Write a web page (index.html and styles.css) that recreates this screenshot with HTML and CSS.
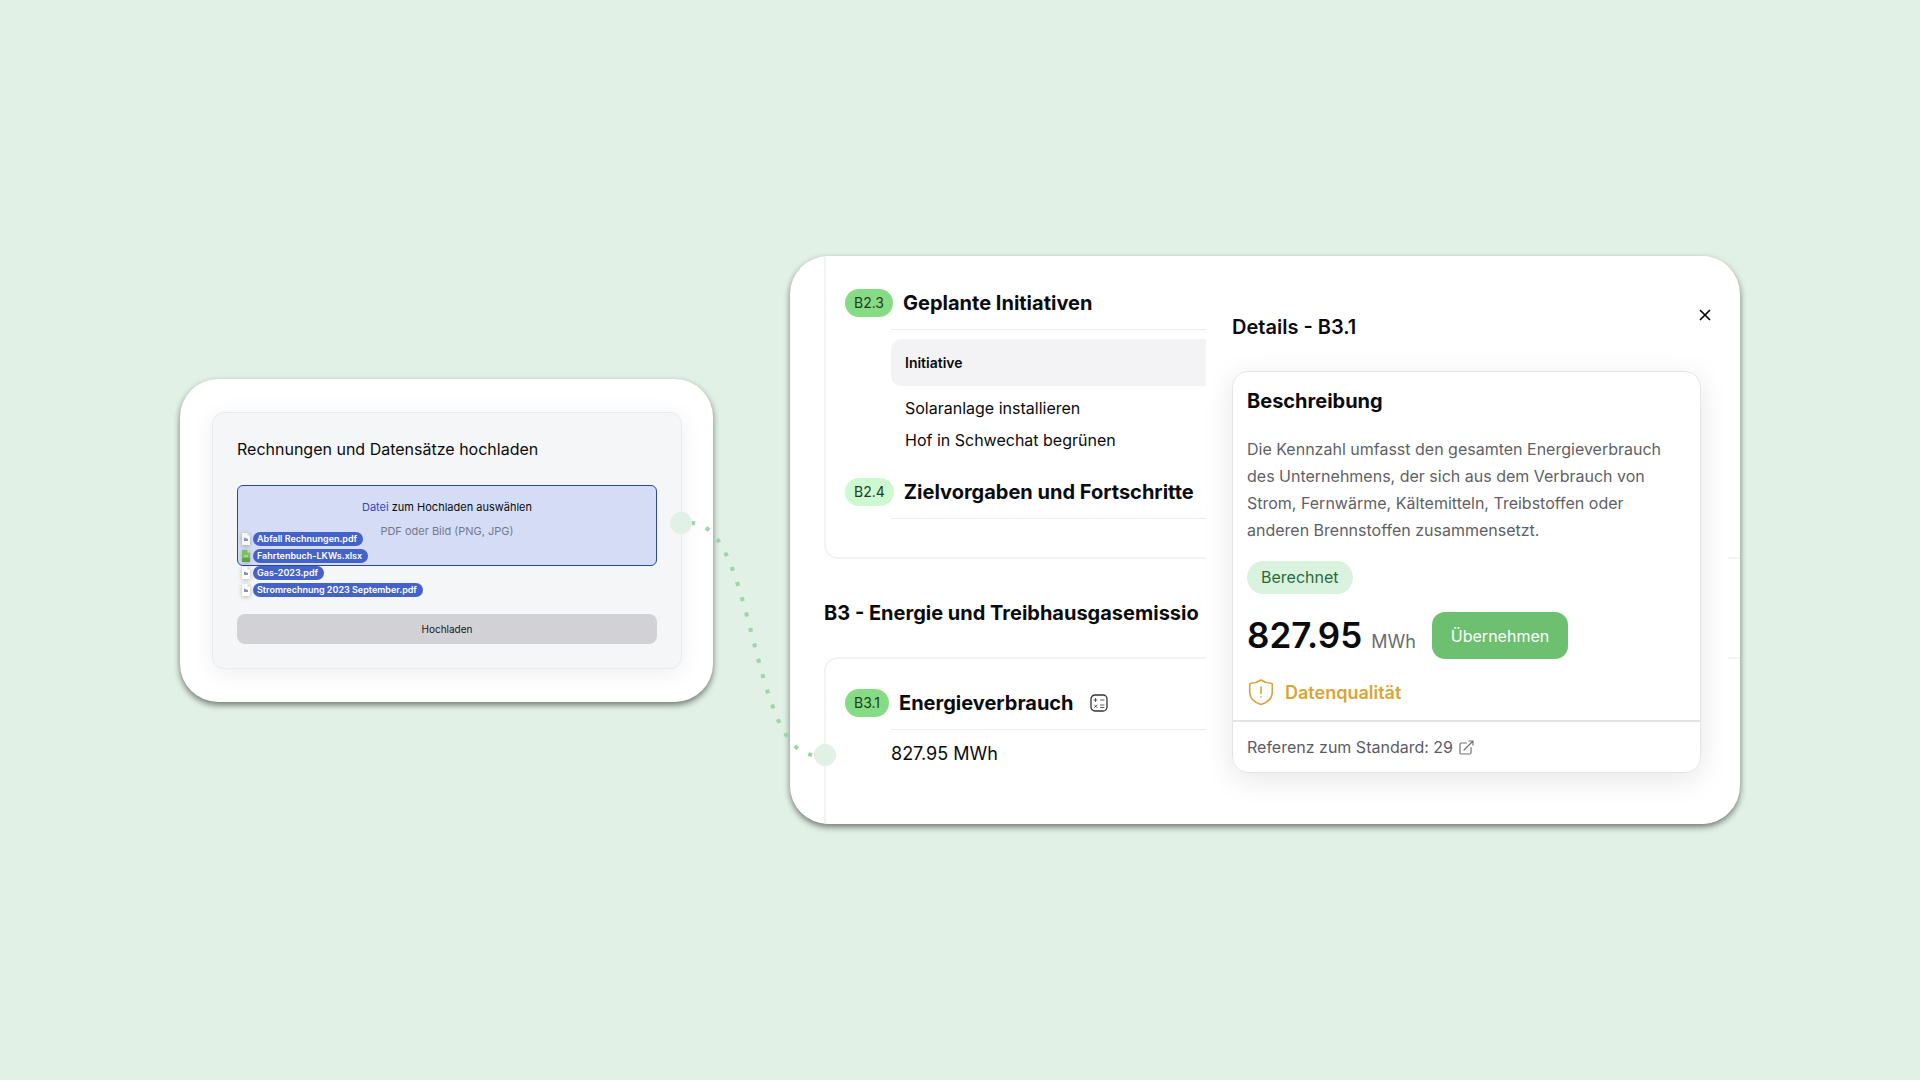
FILE: index.html
```html
<!DOCTYPE html>
<html lang="de">
<head>
    <meta charset="utf-8">
    <title>Energieverbrauch</title>
    <link rel="stylesheet" href="styles.css">
</head>
<body>
<main class="stage">

    <section class="card upload-card">
        <form class="upload">
            <h2 class="upload-title">Rechnungen und Datensätze hochladen</h2>
            <div class="dropzone">
                <p class="dropzone-text"><a href="#">Datei</a> zum Hochladen auswählen</p>
                <p class="dropzone-hint">PDF oder Bild (PNG, JPG)</p>
                <!-- files being dragged in, they hang over the edge of the dropzone -->
                <ul class="files">
                    <li><svg class="file-icon" viewBox="0 0 10 12"><path d="M1 0h5.500l2.500 2.500V12H1z" fill="#f7f7f8"/><path d="M6.500 0v2.500H9z" fill="#d5d7de"/><path d="M3 4.500l4 1.500v2H3z" fill="#8d95ad"/></svg><span>Abfall Rechnungen.pdf</span></li>
                    <li><svg class="file-icon" viewBox="0 0 10 12"><path d="M1 0h5.500l2.500 2.500V12H1z" fill="#7cc05c"/><path d="M6.500 0v2.500H9z" fill="#c9e8b4"/><path d="M1 8h8v4H1z" fill="#5aa544"/><path d="M3 5h4v2H3z" fill="#a5d68c"/></svg><span>Fahrtenbuch-LKWs.xlsx</span></li>
                    <li><svg class="file-icon" viewBox="0 0 10 12"><path d="M1 0h5.500l2.500 2.500V12H1z" fill="#fff"/><path d="M6.500 0v2.500H9z" fill="#d5d7de"/><path d="M3 4.500l4 1.500v2H3z" fill="#8d95ad"/></svg><span>Gas-2023.pdf</span></li>
                    <li><svg class="file-icon" viewBox="0 0 10 12"><path d="M1 0h5.500l2.500 2.500V12H1z" fill="#fff"/><path d="M6.500 0v2.500H9z" fill="#d5d7de"/><path d="M3 4.500l4 1.500v2H3z" fill="#8d95ad"/></svg><span>Stromrechnung 2023 September.pdf</span></li>
                </ul>
            </div>
            <button type="button" class="upload-button">Hochladen</button>
        </form>

        <!-- dotted line from the upload to the value -->
        <svg class="connector" width="166" height="254" viewBox="0 0 166 254">
            <path d="M21 11C85 11 81 243 145 243" fill="none" stroke="#9bd6a5" stroke-width="4" stroke-dasharray="4 11.900"/>
            <circle cx="11" cy="11" r="11" fill="#e0f1e5"/>
            <circle cx="155" cy="243" r="11" fill="#e0f1e5"/>
        </svg>
    </section>

    <section class="card report-card">
        <div class="report">
            <div class="box box-first">
                <div class="metric-head">
                    <span class="badge">B2.3</span>
                    <h3>Geplante Initiativen</h3>
                </div>
                <div class="metric-body">
                    <table class="initiatives">
                        <thead><tr><th>Initiative</th></tr></thead>
                        <tbody>
                            <tr><td>Solaranlage installieren</td></tr>
                            <tr><td>Hof in Schwechat begrünen</td></tr>
                        </tbody>
                    </table>
                </div>
                <div class="metric-head">
                    <span class="badge badge-light">B2.4</span>
                    <h3>Zielvorgaben und Fortschritte</h3>
                </div>
                <div class="metric-body"></div>
            </div>

            <h2 class="chapter">B3 - Energie und Treibhausgasemissio</h2>

            <div class="box box-last">
                <div class="metric-head">
                    <span class="badge">B3.1</span>
                    <h3>Energieverbrauch</h3>
                    <svg class="calc" width="18" height="18" viewBox="0 0 18 18" fill="none" stroke="#333" stroke-linecap="round">
                        <rect x="1" y="1" width="16" height="16" rx="4" stroke-width="1.300"/>
                        <path d="M4 6h3M5.500 4.500v3M10.500 6H14M4.500 11l2.500 2.500M7 11l-2.500 2.500M10.500 11H14M10.500 13.500H14" stroke-width=".8"/>
                    </svg>
                </div>
                <div class="metric-body">
                    <p class="value">827.95 MWh</p>
                </div>
            </div>
        </div>

        <aside class="drawer">
            <header class="drawer-head">
                <h2>Details - B3.1</h2>
                <button type="button" class="close" aria-label="Schließen">
                    <svg width="12" height="12" viewBox="0 0 12 12" stroke="#000" stroke-width="1.600"><path d="M1 1l10 10M11 1L1 11"/></svg>
                </button>
            </header>
            <article class="details">
                <div class="details-body">
                    <h3>Beschreibung</h3>
                    <p class="description">Die Kennzahl umfasst den gesamten Energieverbrauch<br>des Unternehmens, der sich aus dem Verbrauch von<br>Strom, Fernwärme, Kältemitteln, Treibstoffen oder<br>anderen Brennstoffen zusammensetzt.</p>
                    <span class="status">Berechnet</span>
                    <div class="result">
                        <strong>827.95</strong>
                        <span class="unit">MWh</span>
                        <button type="button" class="apply">Übernehmen</button>
                    </div>
                    <div class="quality">
                        <svg width="28" height="28" viewBox="0 0 28 28" fill="none" stroke="#d9a536" stroke-width="1.600" stroke-linecap="round" stroke-linejoin="round">
                            <path d="M14 2C11 4 7 5.200 3.800 5.300c-.7 0-1.100.4-1.100 1V14c0 6.500 5 10.500 11.300 12.500C20.300 24.500 25.300 20.500 25.300 14V6.300c0-.6-.4-1-1.100-1C21 5.200 17 4 14 2z"/>
                            <path d="M14 9v6.500M14 18.800v.2"/>
                        </svg>
                        <span>Datenqualität</span>
                    </div>
                </div>
                <footer class="reference">
                    <a href="#">Referenz zum Standard: 29
                        <svg width="15" height="15" viewBox="0 0 15 15" fill="none" stroke="#70707a" stroke-width="1.200" stroke-linecap="round" stroke-linejoin="round">
                            <path d="M7.500 3H2.200C1.500 3 1 3.500 1 4.200v8.600c0 .7.5 1.200 1.200 1.200h8.600c.7 0 1.200-.5 1.200-1.200V7.500M5 10L14 1M10 1h4v4"/>
                        </svg>
                    </a>
                </footer>
            </article>
        </aside>
    </section>

</main>
</body>
</html>
```

FILE: styles.css
```css
* {
    box-sizing: border-box;
}
body {
    margin: 0;
    background: #e1f1e5;
    font-family: Inter, "Liberation Sans", sans-serif;
    color: #0b0b0d;
}
h2, h3, p, ul {
    margin: 0;
    padding: 0;
}
button {
    border: 0;
    padding: 0;
    font-family: inherit;
    cursor: pointer;
}
a {
    text-decoration: none;
    color: inherit;
}
.stage {
    min-height: 100vh;
    padding: 0 180px;
    display: grid;
    grid-template-columns: 533fr 950fr;
    align-items: center;
    gap: 77px;
}
.card {
    position: relative;
    min-width: 0;
    background: #fff;
    border-radius: 38px;
    box-shadow: 0 3px 6px rgba(0, 0, 0, 0.5);
}

/* upload */
.upload-card {
    z-index: 1;
    padding: 33px 31px 33px 32px;
}
.upload {
    padding: 24px;
    background: #f4f6f8;
    border: 1px solid #e9eaed;
    border-radius: 12px;
    box-shadow: 0 4px 24px rgba(0, 0, 0, 0.07);
}
.upload-title {
    font-size: 16px;
    line-height: 24px;
    font-weight: 400;
}
.dropzone {
    position: relative;
    height: 81px;
    margin: 24px 0 48px;
    padding-top: 13px;
    text-align: center;
    background: #d5dcf6;
    border: 1px solid #2c479f;
    border-radius: 6px;
}
.dropzone-text {
    font-size: 11px;
    line-height: 16px;
}
.dropzone-text a {
    color: #3446c0;
}
.dropzone-hint {
    margin-top: 8px;
    font-size: 11px;
    line-height: 16px;
    color: #74788a;
}
.files {
    position: absolute;
    left: 3px;
    top: 46px;
    display: grid;
    gap: 3px;
    list-style: none;
    font-size: 9px;
    line-height: 14px;
    font-weight: 600;
    color: #fff;
}
.files li {
    display: flex;
    align-items: center;
    gap: 2px;
}
.files span {
    padding: 0 6px 0 4px;
    border-radius: 7px;
    background: #4562cb;
}
.file-icon {
    width: 10px;
    height: 12px;
    filter: drop-shadow(0 1px 2px rgba(0, 0, 0, 0.25));
}
.upload-button {
    display: block;
    width: 100%;
    height: 30px;
    border-radius: 8px;
    background: #d2d1d6;
    font-size: 10px;
    color: #18181b;
}
.connector {
    position: absolute;
    top: 133px;
    right: -123px;
}

/* report */
.report-card {
    overflow: hidden;
}
.box {
    margin: 0 -20px 0 34px;
    padding: 0 60px 0 19px;
    border: 2px solid #f3f3f4;
    border-radius: 14px;
}
.box-first {
    padding-top: 33px;
    padding-bottom: 38px;
    border-top: 0;
    border-top-left-radius: 0;
}
.box-last {
    padding-top: 30px;
    padding-bottom: 56px;
    border-bottom: 0;
    border-bottom-left-radius: 0;
}
.metric-head {
    display: flex;
    align-items: center;
    gap: 10px;
}
.metric-head h3, .chapter {
    font-size: 20px;
    line-height: 28px;
    font-weight: 700;
    white-space: nowrap;
}
.badge {
    padding: 0 9px;
    border-radius: 14px;
    background: #86dc84;
    font-size: 14px;
    line-height: 28px;
    color: #1d3b22;
}
.badge-light {
    background: #cdf9d1;
}
.metric-body {
    margin: 12px 0 0 46px;
    border-top: 1px solid #ededee;
}
.initiatives {
    width: 100%;
    margin: 9px 0 22px;
    border-spacing: 0;
    text-align: left;
}
.initiatives th {
    height: 47px;
    padding: 0 14px;
    border-radius: 10px;
    background: #f3f3f5;
    font-size: 14px;
    font-weight: 600;
}
.initiatives td {
    height: 32px;
    padding: 0 14px;
    font-size: 16px;
}
.initiatives tr:first-child td {
    height: 38px;
    padding-top: 6px;
}
.chapter {
    margin: 40px 0 30px 34px;
}
.calc {
    margin-left: 6px;
}
.value {
    padding-top: 10px;
    font-size: 18px;
    line-height: 28px;
}

/* drawer lies over the report */
.drawer {
    position: absolute;
    top: 0;
    bottom: 0;
    left: 416px;
    right: 12px;
    padding: 56px 27px 0 26px;
    background: #fff;
}
.drawer-head {
    display: flex;
    justify-content: space-between;
    margin-bottom: 29px;
}
.drawer-head h2 {
    font-size: 20px;
    line-height: 30px;
    font-weight: 600;
}
.close {
    width: 12px;
    height: 12px;
    margin: -3px -10px 0 0;
    background: none;
}
.close svg {
    display: block;
}
.details {
    border: 1px solid #e4e4e7;
    border-radius: 16px;
    box-shadow: 0 6px 30px rgba(0, 0, 0, 0.1);
}
.details-body {
    padding: 15px 14px 14px;
}
.details-body h3 {
    font-size: 20px;
    line-height: 28px;
    font-weight: 700;
}
.description {
    margin: 21px 0 17px;
    font-size: 16px;
    line-height: 27px;
    color: #5f5f66;
    white-space: nowrap;
}
.status {
    display: inline-block;
    padding: 0 14px;
    border-radius: 17px;
    background: #d9f3de;
    font-size: 16px;
    line-height: 33px;
    color: #2c6a3c;
}
.result {
    display: flex;
    align-items: baseline;
    margin-top: 18px;
}
.result strong {
    font-size: 35px;
    line-height: 47px;
    font-weight: 600;
}
.unit {
    margin: 0 16px 0 9px;
    font-size: 18px;
    color: #6b6b73;
}
.apply {
    align-self: center;
    height: 47px;
    padding: 0 19px;
    border-radius: 13px;
    background: #6cc06f;
    font-size: 16px;
    color: #fff;
}
.quality {
    display: flex;
    align-items: center;
    gap: 10px;
    margin-top: 19px;
    font-size: 18px;
    font-weight: 600;
    color: #d9a536;
}
.reference {
    padding: 13px 14px;
    border-top: 2px solid #e4e4e7;
    font-size: 16px;
    line-height: 24px;
    color: #5b5b66;
}
.reference a {
    display: flex;
    align-items: center;
    gap: 6px;
}
```
